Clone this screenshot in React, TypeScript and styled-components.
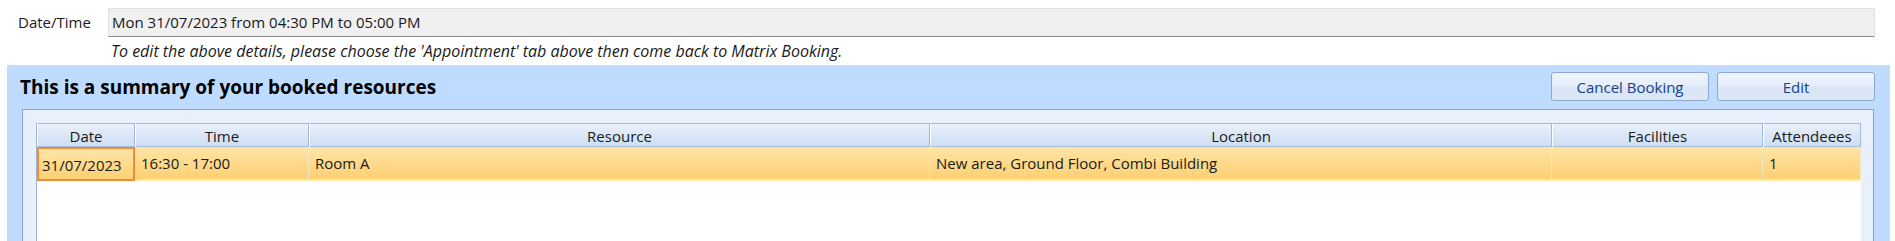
import React from "react";
import styled, { createGlobalStyle } from "styled-components";

const GlobalStyle = createGlobalStyle`
  html, body {
    margin: 0;
    padding: 0;
    overflow: hidden;
    background: #ffffff;
  }
  body {
    font-family: "Open Sans", "Noto Sans", "Liberation Sans", sans-serif;
    color: #1a1a1a;
  }
`;

const Page = styled.div`
  width: 1895px;
  height: 241px;
  display: flex;
  flex-direction: column;
  overflow: hidden;
`;

const DetailRow = styled.div`
  display: flex;
  align-items: flex-start;
  padding: 8px 20px 0 18px;
`;

const FieldLabel = styled.div`
  width: 90px;
  font-size: 15px;
  line-height: 29px;
  color: #1a1a1a;
`;

const FieldValue = styled.div`
  width: 1767px;
  box-sizing: border-box;
  height: 29px;
  padding: 0 0 0 3px;
  background: #f0f0f0;
  border: 1px solid #e0e0e0;
  border-bottom: 1px solid #8a8a8a;
  font-size: 15px;
  line-height: 27px;
  color: #1a1a1a;
`;

const Hint = styled.div`
  margin: 4px 0 0 111px;
  font-size: 16px;
  font-style: italic;
  line-height: 20px;
  height: 24px;
  color: #1a1a1a;
`;

const SummaryPanel = styled.section`
  margin-left: 7px;
  width: 1883px;
  flex: 1;
  background: #bfdbff;
  display: flex;
  flex-direction: column;
`;

const PanelHeader = styled.div`
  display: flex;
  align-items: flex-start;
  justify-content: space-between;
  height: 44px;
  box-sizing: border-box;
  padding: 7px 15px 0 13px;
`;

const PanelTitle = styled.h2`
  margin: 0;
  font-size: 19px;
  font-weight: 700;
  line-height: 30px;
  color: #000000;
`;

const ButtonGroup = styled.div`
  display: flex;
  gap: 8px;
`;

const ActionButton = styled.button`
  width: 158px;
  height: 29px;
  box-sizing: border-box;
  border: 1px solid #8ea8cc;
  border-radius: 3px;
  background: linear-gradient(
    to bottom,
    #eef4fc 0%,
    #e6eefa 45%,
    #d9e5f5 55%,
    #dde8f6 100%
  );
  font-family: inherit;
  font-size: 15px;
  color: #15428b;
  padding: 0;
  cursor: pointer;
`;

const GridFrame = styled.div`
  flex: 1;
  margin: 0 16px 0 15px;
  box-sizing: border-box;
  border: 1px solid #8ba6cc;
  border-bottom: none;
  background: #e8f0fb;
  padding: 13px 12px 0 13px;
  display: flex;
`;

const Grid = styled.div`
  flex: 1;
  background: #ffffff;
  border-left: 1px solid #9db3d3;
  display: grid;
  grid-template-columns: 98px 174px 621px 622px 211px 98px;
  grid-template-rows: 24px 34px;
  align-content: start;
`;

const HeaderCell = styled.div`
  box-sizing: border-box;
  border-top: 1px solid #a3b8d6;
  border-right: 1px solid #a3b8d6;
  border-left: 1px solid #ffffff;
  border-bottom: 1px solid #a9bddb;
  background: linear-gradient(to bottom, #e9f0fb 0%, #dbe7f7 50%, #cddff5 100%);
  font-size: 15px;
  line-height: 24px;
  text-align: center;
  color: #1a1a1a;
  overflow: hidden;
  white-space: nowrap;
`;

const DataCell = styled.div<{ $focused?: boolean }>`
  box-sizing: border-box;
  padding-left: ${(p) => (p.$focused ? "3px" : "6px")};
  background: linear-gradient(to bottom, #fee5a6 0%, #fed98a 55%, #fdd072 100%);
  border-right: 1px solid #f3e6c4;
  border-bottom: 2px solid #fde9b0;
  border: ${(p) => (p.$focused ? "2px solid #f28b3a" : undefined)};
  font-size: 15px;
  line-height: 32px;
  color: #1a1a1a;
  white-space: nowrap;
  overflow: hidden;
`;

const columns = ["Date", "Time", "Resource", "Location", "Facilities", "Attendeees"];
const row = ["31/07/2023", "16:30 - 17:00", "Room A", "New area, Ground Floor, Combi Building", "", "1"];

export default function App() {
  return (
    <Page>
      <GlobalStyle />
      <DetailRow>
        <FieldLabel>Date/Time</FieldLabel>
        <FieldValue>Mon 31/07/2023 from 04:30 PM to 05:00 PM</FieldValue>
      </DetailRow>
      <Hint>
        To edit the above details, please choose the 'Appointment' tab above then come back to Matrix Booking.
      </Hint>
      <SummaryPanel>
        <PanelHeader>
          <PanelTitle>This is a summary of your booked resources</PanelTitle>
          <ButtonGroup>
            <ActionButton>Cancel Booking</ActionButton>
            <ActionButton>Edit</ActionButton>
          </ButtonGroup>
        </PanelHeader>
        <GridFrame>
          <Grid>
            {columns.map((c) => (
              <HeaderCell key={c}>{c}</HeaderCell>
            ))}
            {row.map((v, i) => (
              <DataCell key={i} $focused={i === 0}>
                {v}
              </DataCell>
            ))}
          </Grid>
        </GridFrame>
      </SummaryPanel>
    </Page>
  );
}
